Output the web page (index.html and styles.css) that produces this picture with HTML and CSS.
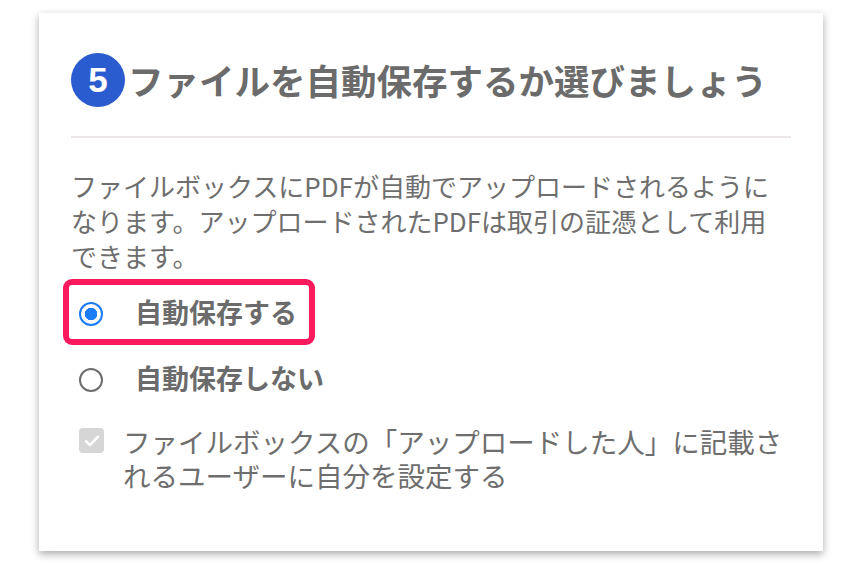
FILE: index.html
```html
<!DOCTYPE html>
<html lang="ja">

<head>
  <meta charset="utf-8">
  <meta name="viewport" content="width=device-width">
  <title>ファイルの自動保存</title>
  <link rel="stylesheet" href="styles.css">
</head>

<body>
  <div class="page">
    <div class="card">
      <div class="step-head">
        <span class="step-num">5</span>
        <h2>ファイルを自動保存するか選びましょう</h2>
      </div>
      <hr class="divider">
      <p class="lead">ファイルボックスにPDFが自動でアップロードされるようになります。アップロードされたPDFは取引の証憑として利用できます。</p>

      <div class="options">
        <label class="option marked">
          <span class="radio checked"></span>
          <span class="option-text">自動保存する</span>
        </label>
        <label class="option">
          <span class="radio"></span>
          <span class="option-text">自動保存しない</span>
        </label>
      </div>

      <label class="check-row">
        <span class="checkbox">
          <svg viewBox="0 0 24 24" width="20" height="20">
            <path d="M5 12.5l4.5 4.5L19 7" fill="none" stroke="#fff" stroke-width="3.2" stroke-linecap="round" stroke-linejoin="round" />
          </svg>
        </span>
        <span class="check-text">ファイルボックスの「アップロードした人」に記載されるユーザーに自分を設定する</span>
      </label>
    </div>
  </div>
</body>

</html>
```

FILE: styles.css
```css
/* Reset default styles */
body,
h2,
p {
  margin: 0;
  padding: 0;
}

body {
  background-color: #ffffff;
  font-family: "Noto Sans CJK JP", "Noto Sans", sans-serif;
  color: #6e6e6e;
}

.page {
  padding: 13px 0 0 39px;
  height: 564px;
  box-sizing: border-box;
  overflow: hidden;
}

/* White card with a soft shadow */
.card {
  box-sizing: border-box;
  width: 784px;
  height: 538px;
  padding: 40px 32px 0 32px;
  background-color: #ffffff;
  box-shadow: 0 3px 8px rgba(0, 0, 0, 0.34);
}

/* Step heading */
.step-head {
  display: flex;
  align-items: center;
  gap: 3px;
  height: 54px;
}

.step-num {
  display: flex;
  align-items: center;
  justify-content: center;
  width: 54px;
  height: 54px;
  border-radius: 50%;
  background-color: #2a5bcf;
  color: #ffffff;
  font-family: "Liberation Sans", Arial, sans-serif;
  font-weight: bold;
  font-size: 35px;
  flex-shrink: 0;
}

.step-head h2 {
  font-size: 35.5px;
  font-weight: bold;
  color: #6b6b6b;
  line-height: 54px;
  white-space: nowrap;
}

.divider {
  margin: 29px 0 0 0;
  border: none;
  border-top: 2px solid #ece8ea;
}

.lead {
  margin-top: 30px;
  font-size: 26px;
  line-height: 35px;
  color: #6e6e6e;
}

/* Radio options */
.options {
  margin: 6px 0 0 -8px;
  display: flex;
  flex-direction: column;
  align-items: flex-start;
}

.option {
  display: flex;
  align-items: center;
  height: 54px;
  padding: 0 12px 0 10px;
  border: 6px solid transparent;
  border-radius: 9px;
  cursor: pointer;
}

.option.marked {
  border-color: #fc1a5e;
}

.radio {
  box-sizing: border-box;
  width: 24px;
  height: 24px;
  border-radius: 50%;
  border: 2px solid #6e6e6e;
  margin-top: 4px;
  flex-shrink: 0;
}

.radio.checked {
  border-color: #1a7cf7;
  background: radial-gradient(circle, #1a7cf7 0 6px, #ffffff 6.5px);
}

.option-text {
  margin-left: 32px;
  font-size: 27px;
  font-weight: bold;
  color: #6b6b6b;
  line-height: 54px;
}

/* Disabled checkbox row */
.check-row {
  display: flex;
  align-items: flex-start;
  margin-top: 13px;
  padding-left: 8px;
}

.checkbox {
  display: flex;
  align-items: center;
  justify-content: center;
  width: 25px;
  height: 25px;
  margin-top: 4px;
  border-radius: 4px;
  background-color: #d6d6d6;
  flex-shrink: 0;
}

.check-text {
  margin-left: 19px;
  font-size: 27.5px;
  line-height: 34px;
  color: #6e6e6e;
}
```
